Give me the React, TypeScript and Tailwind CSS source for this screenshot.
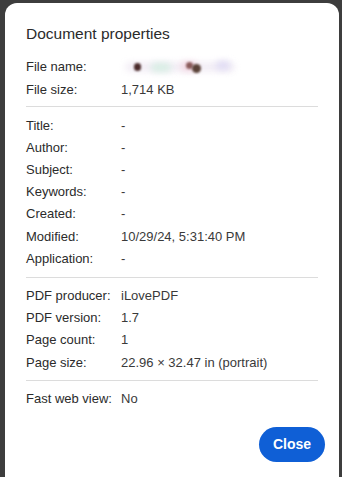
import React from "react";

const sections: [string, string][][] = [
  [
    ["Title:", "-"],
    ["Author:", "-"],
    ["Subject:", "-"],
    ["Keywords:", "-"],
    ["Created:", "-"],
    ["Modified:", "10/29/24, 5:31:40 PM"],
    ["Application:", "-"],
  ],
  [
    ["PDF producer:", "iLovePDF"],
    ["PDF version:", "1.7"],
    ["Page count:", "1"],
    ["Page size:", "22.96 × 32.47 in (portrait)"],
  ],
];

function Row({ label, children }: { label: string; children: React.ReactNode }) {
  return (
    <div className="flex h-[22.2px] items-center text-[13px]">
      <div className="w-[95px] shrink-0 text-[#2b2b2b]">{label}</div>
      <div className="text-[#3a3a3a]">{children}</div>
    </div>
  );
}

function BlurredName() {
  return (
    <div className="relative h-[16px] w-[120px]">
      <div className="absolute left-[4px] top-[3px] h-[10px] w-[110px] rounded-full bg-[#f3eef6] blur-[3px]" />
      <div className="absolute left-[30px] top-[4px] h-[9px] w-[20px] rounded-full bg-[#d8eee4] blur-[3px]" />
      <div className="absolute left-[60px] top-[3px] h-[9px] w-[16px] rounded-full bg-[#f4d6e2] blur-[3px]" />
      <div className="absolute left-[95px] top-[2px] h-[9px] w-[14px] rounded-full bg-[#e0dcf4] blur-[3px]" />
      <div className="absolute left-[13px] top-[4px] h-[8px] w-[7px] rounded-full bg-[#4a2a2a] blur-[1px]" />
      <div className="absolute left-[65px] top-[3px] h-[7px] w-[7px] rounded-full bg-[#8a5a5a] blur-[1px]" />
      <div className="absolute left-[71px] top-[5px] h-[9px] w-[9px] rounded-full bg-[#5a4238] blur-[1px]" />
    </div>
  );
}

export default function App() {
  return (
    <div
      className="h-[477px] w-[342px] overflow-hidden bg-[#3d3d3d] pl-[5px] pr-[3px] pt-[3px]"
      style={{ fontFamily: '"Liberation Sans", Arial, sans-serif' }}
    >
      <div className="flex h-[480px] flex-col rounded-t-[12px] bg-white px-[21px]">
        <div className="pt-[19px] text-[15.5px] leading-[24px] text-[#2b2b2b]">Document properties</div>
        <div className="mt-[10px] pb-[6px]">
          <Row label="File name:">
            <BlurredName />
          </Row>
          <Row label="File size:">1,714 KB</Row>
        </div>
        {sections.map((rows, i) => (
          <div key={i} className="border-t border-[#dcdcdc] py-[7px]">
            {rows.map(([l, v]) => (
              <Row key={l} label={l}>
                {v}
              </Row>
            ))}
          </div>
        ))}
        <div className="border-t border-[#dcdcdc] pt-[6px]">
          <Row label="Fast web view:">No</Row>
        </div>
        <div className="mt-[17px] flex justify-end">
          <button className="-mr-[7px] h-[35px] w-[66px] rounded-full bg-[#0f5fd6] text-[14px] font-bold text-white">
            Close
          </button>
        </div>
      </div>
    </div>
  );
}
